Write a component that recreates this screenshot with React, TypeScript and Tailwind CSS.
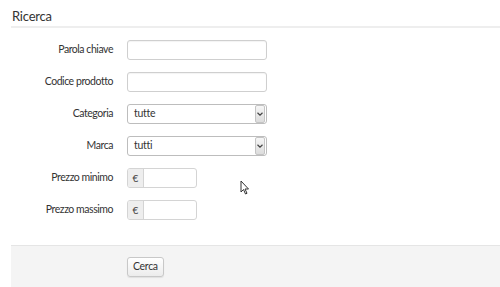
import { ReactNode } from 'react'

function Row({ label, children }: { label: string; children: ReactNode }) {
  return (
    <div className="flex items-center h-[20px]">
      <div className="w-[114px] text-right text-[10.5px] tracking-[-0.45px] text-[#333] pr-[1px]">{label}</div>
      <div className="ml-[13px] flex">{children}</div>
    </div>
  )
}

function TextInput() {
  return <div className="w-[140px] h-[20px] rounded-[3px] border border-[#cfcfcf] bg-white shadow-[inset_0_1px_1px_rgba(0,0,0,0.05)]" />
}

function Select({ value }: { value: string }) {
  return (
    <div className="w-[140px] h-[20px] rounded-[3px] border border-[#bdbdbd] bg-white flex items-center">
      <span className="flex-1 pl-[6px] text-[10.5px] tracking-[-0.3px] text-[#333]">{value}</span>
      <span className="w-[10px] h-[18px] mr-[1px] bg-gradient-to-b from-[#f6f6f6] to-[#dcdcdc] border border-[#c4c4c4] rounded-[2px] flex items-center justify-center">
        <svg width="6" height="4" viewBox="0 0 6 4">
          <path d="M0.5 0.8 L3 3.2 L5.5 0.8" fill="none" stroke="#444" strokeWidth="1.2" />
        </svg>
      </span>
    </div>
  )
}

function PriceInput() {
  return (
    <div className="w-[70px] h-[20px] rounded-[3px] border border-[#d4d4d4] bg-white flex overflow-hidden">
      <span className="w-[16px] bg-[#eeeeee] border-r border-[#d4d4d4] text-[10px] text-[#444] flex items-center justify-center">€</span>
    </div>
  )
}

export default function App() {
  return (
    <div className="relative w-[500px] h-[287px] bg-white flex flex-col font-['Lato','Open_Sans',sans-serif] overflow-hidden">
      <div className="pl-[12px] pt-[7px] h-[26px] text-[13px] tracking-[-0.2px] text-[#333]">Ricerca</div>
      <div className="ml-[11px] h-[2px] bg-[#eeeeee]" />
      <div className="flex flex-col gap-[12px] pt-[12px]">
        <Row label="Parola chiave"><TextInput /></Row>
        <Row label="Codice prodotto"><TextInput /></Row>
        <Row label="Categoria"><Select value="tutte" /></Row>
        <Row label="Marca"><Select value="tutti" /></Row>
        <Row label="Prezzo minimo"><PriceInput /></Row>
        <Row label="Prezzo massimo"><PriceInput /></Row>
      </div>
      <svg className="absolute left-[240px] top-[180px]" width="10" height="16" viewBox="0 0 10 16">
        <path d="M1 1 L1 12 L3.5 9.5 L5.5 14 L7 13.3 L5 9 L8.5 9 Z" fill="#fff" stroke="#333" strokeWidth="1" />
      </svg>
      <div className="mt-auto ml-[11px] h-[42px] bg-[#f4f4f4] border-t border-[#e5e5e5] flex items-start pt-[11px] pl-[116px]">
        <button className="h-[20px] px-[5px] rounded-[3px] border border-[#c8c8c8] bg-gradient-to-b from-white to-[#ececec] text-[10.5px] tracking-[-0.3px] text-[#333] shadow-[0_1px_1px_rgba(0,0,0,0.08)]">Cerca</button>
      </div>
    </div>
  )
}
